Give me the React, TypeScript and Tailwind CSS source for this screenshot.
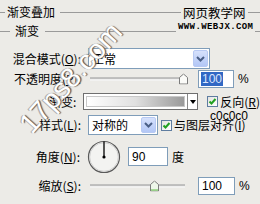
import React from "react";

function DropBtn() {
  return (
    <div className="w-[15px] h-full rounded-[2px] bg-gradient-to-b from-[#d6e1fc] to-[#b3c7f6] border border-[#b7c9f3] flex items-center justify-center shrink-0">
      <svg width="9" height="6" viewBox="0 0 9 6">
        <path d="M1 1 L4.5 4.5 L8 1" stroke="#4a5f86" strokeWidth="2" fill="none" />
      </svg>
    </div>
  );
}

function Check() {
  return (
    <div className="w-[11px] h-[11px] border border-[#5f7da0] bg-gradient-to-br from-[#e4e4e0] to-white flex items-center justify-center shrink-0">
      <svg width="9" height="9" viewBox="0 0 9 9">
        <path d="M1.5 4.5 L3.5 6.5 L7.5 2" stroke="#21a121" strokeWidth="2" fill="none" />
      </svg>
    </div>
  );
}

function Thumb({ green }: { green?: boolean }) {
  return (
    <svg width="9" height="11" viewBox="0 0 9 11">
      <path
        d="M0.5 4 L4.5 0.5 L8.5 4 L8.5 10.5 L0.5 10.5 Z"
        fill={green ? "#eef7ea" : "#fbfbf8"}
        stroke="#7c7c7c"
      />
      {green && <path d="M1 9.5 L8 9.5" stroke="#8fd07c" strokeWidth="1.5" />}
    </svg>
  );
}

function Slider({ pos, green }: { pos: number; green?: boolean }) {
  return (
    <div className="relative w-[100px] h-full shrink-0">
      <div className="absolute left-[2px] right-[3px] top-1/2 -translate-y-1/2 h-[3px] border-t border-[#9c9c9c] border-b border-b-white bg-[#dedede]" />
      <div className="absolute top-1/2 -translate-y-1/2" style={{ left: pos }}>
        <Thumb green={green} />
      </div>
    </div>
  );
}

export default function App() {
  return (
    <div className="w-[260px] h-[204px] bg-[#ecebe7] relative overflow-hidden text-[12px] text-black leading-none font-['Noto_Sans_CJK_SC',sans-serif]">
      <div className="flex items-center h-[24px]">
        <div className="w-[5px] h-px bg-[#9a9a9a]" />
        <span className="pl-[2px] pr-[5px]">渐变叠加</span>
        <div className="flex-1 h-px bg-[#9a9a9a]" />
      </div>
      <div className="flex items-center h-[14px]">
        <div className="w-[10px] h-px bg-[#9a9a9a]" />
        <span className="ml-[5px] mr-[6px]">渐变</span>
        <div className="flex-1 h-px bg-[#9a9a9a]" />
      </div>

      <div className="flex items-center mt-[10px] h-[21px]">
        <div className="w-[88px] pr-[7px] text-right">
          混合模式(<u>O</u>):
        </div>
        <div className="w-[122px] h-full bg-white border border-[#7f9db9] flex items-center pl-[3px] pr-[1px] py-[1px]">
          <span className="flex-1">正常</span>
          <DropBtn />
        </div>
      </div>

      <div className="flex items-center mt-[1px] h-[18px]">
        <div className="w-[88px] pr-[7px] text-right">
          不透明度(<u>P</u>):
        </div>
        <Slider pos={91} />
        <div className="ml-[10px] w-[36px] h-full bg-white border border-[#7f9db9] flex items-center pl-[2px]">
          <span className="bg-[#3168c4] text-[#dce6ff] px-[1px] py-[1px] font-['Liberation_Sans',sans-serif]">100</span>
        </div>
        <span className="ml-[4px] font-['Liberation_Sans',sans-serif]">%</span>
      </div>

      <div className="flex items-center mt-[5px] h-[17px]">
        <div className="w-[88px] pr-[7px] text-right">渐变:</div>
        <div className="w-[122px] h-full border border-[#6f6f6f] flex bg-white">
          <div className="flex-1 m-[2px] bg-gradient-to-r from-white via-[#e0e0e0] to-[#9a9a9a] border border-[#c8c8c8]" />
          <div className="w-[10px] border-l border-[#8a8a8a] flex items-center justify-center">
            <svg width="6" height="4" viewBox="0 0 6 4">
              <path d="M0 0 L6 0 L3 4 Z" fill="#000" />
            </svg>
          </div>
        </div>
        <div className="ml-[9px]">
          <Check />
        </div>
        <span className="ml-[2px] whitespace-nowrap">反向(<u>R</u>)</span>
      </div>

      <div className="flex items-center mt-[5px] h-[20px]">
        <div className="w-[88px] pr-[7px] text-right">
          样式(<u>L</u>):
        </div>
        <div className="w-[70px] h-full bg-white border border-[#7f9db9] flex items-center pl-[3px] pr-[1px] py-[1px]">
          <span className="flex-1">对称的</span>
          <DropBtn />
        </div>
        <div className="ml-[3px]">
          <Check />
        </div>
        <span className="ml-[2px] whitespace-nowrap">
          与图层对齐(<u>I</u>)
        </span>
      </div>

      <div className="flex items-center mt-[5px] h-[33px]">
        <div className="w-[87px] pr-[7px] text-right">
          角度(<u>N</u>):
        </div>
        <svg width="34" height="34" viewBox="0 0 34 34" className="shrink-0">
          <circle cx="17" cy="17" r="15.5" fill="#f3f3f1" stroke="#5a5a5a" strokeWidth="1.2" />
          <circle cx="17" cy="17" r="14.3" fill="none" stroke="#c8c8c8" strokeWidth="0.8" />
          <path d="M17 1.5 L17 17" stroke="#000" strokeWidth="1.3" />
          <circle cx="17" cy="17" r="1.6" fill="#000" />
        </svg>
        <div className="ml-[7px] w-[40px] h-[19px] bg-white border border-[#7f9db9] flex items-center pl-[3px] font-['Liberation_Sans',sans-serif]">
          90
        </div>
        <span className="ml-[4px]">度</span>
      </div>

      <div className="flex items-center mt-[4px] h-[18px]">
        <div className="w-[88px] pr-[7px] text-right">
          缩放(<u>S</u>):
        </div>
        <Slider pos={62} green />
        <div className="ml-[10px] w-[37px] h-full bg-white border border-[#7f9db9] flex items-center pl-[3px] font-['Liberation_Sans',sans-serif]">
          100
        </div>
        <span className="ml-[4px] font-['Liberation_Sans',sans-serif]">%</span>
      </div>

      {/* overlays / watermarks */}
      <div className="absolute left-[181px] top-[5px] px-[2px] bg-[#ecebe7] text-[12.5px] leading-[16px]">网页教学网</div>
      <div className="absolute left-[176px] top-[23px] px-[2px] bg-[#ecebe7] text-[9px] leading-[9px] font-bold tracking-[0.4px] font-['Liberation_Mono',monospace]">
        WWW.WEBJX.COM
      </div>
      <div className="absolute left-[210px] top-[110px] text-[12px] leading-[13px] font-['Liberation_Sans',sans-serif]">c0c0c0</div>
      <div className="absolute left-[-14px] top-[63px] w-[170px] h-[30px] text-center -rotate-[48deg] text-[28px] leading-[30px] text-white font-['Liberation_Sans',sans-serif] [text-shadow:1px_1px_1px_#5a5a5a,-1px_-1px_0_#b0b0b0]">
        17ps8.com
      </div>
    </div>
  );
}
